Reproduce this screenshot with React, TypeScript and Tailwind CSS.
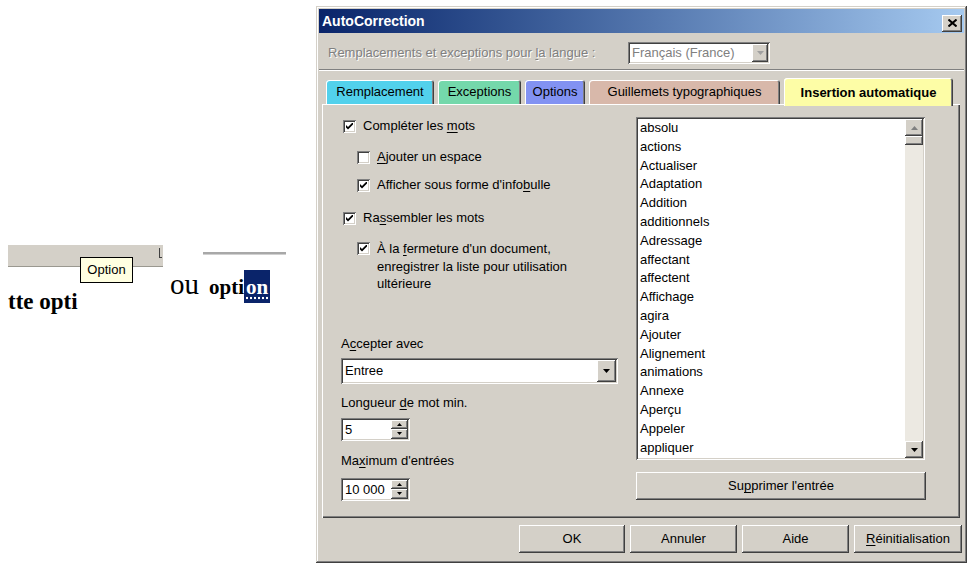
import type { ReactNode } from 'react'

const raised = 'shadow-[inset_-1px_-1px_#404040,inset_1px_1px_#ffffff,inset_-2px_-2px_#808080,inset_2px_2px_#d4d0c8]'
const sunken = 'shadow-[inset_1px_1px_#808080,inset_-1px_-1px_#ffffff,inset_2px_2px_#404040,inset_-2px_-2px_#d4d0c8]'

const words = [
  'absolu', 'actions', 'Actualiser', 'Adaptation', 'Addition', 'additionnels', 'Adressage', 'affectant', 'affectent',
  'Affichage', 'agira', 'Ajouter', 'Alignement', 'animations', 'Annexe', 'Aperçu', 'Appeler', 'appliquer',
]

function Tri({ up, color = '#000' }: { up?: boolean; color?: string }) {
  return (
    <svg width="7" height="4" viewBox="0 0 7 4">
      <path d={up ? 'M0 4h7L3.5 0z' : 'M0 0h7L3.5 4z'} fill={color} />
    </svg>
  )
}

function Check({ on }: { on: boolean }) {
  return (
    <span className={`w-[13px] h-[13px] bg-white shrink-0 flex items-center justify-center ${sunken}`}>
      {on && (
        <svg width="7" height="7" viewBox="0 0 7 7">
          <path d="M0 2L2 4L7 -1V1.5L2 6.5L0 4.5Z" fill="#000" />
        </svg>
      )}
    </span>
  )
}

function U({ children }: { children: ReactNode }) {
  return <span className="underline underline-offset-2">{children}</span>
}

function Spin({ value }: { value: string }) {
  return (
    <div className={`w-[69px] h-[23px] bg-white flex p-[2px] ${sunken}`}>
      <div className="flex-1 pl-[2px] leading-[19px]">{value}</div>
      <div className="w-[17px] flex flex-col">
        <div className={`flex-1 bg-[#d4d0c8] flex items-center justify-center ${raised}`}>
          <svg width="5" height="3" viewBox="0 0 5 3"><path d="M0 3h5L2.5 0z" fill="#000" /></svg>
        </div>
        <div className={`flex-1 bg-[#d4d0c8] flex items-center justify-center ${raised}`}>
          <svg width="5" height="3" viewBox="0 0 5 3"><path d="M0 0h5L2.5 3z" fill="#000" /></svg>
        </div>
      </div>
    </div>
  )
}

function Btn({ children, w }: { children: ReactNode; w: string }) {
  return <div className={`${w} h-[28px] bg-[#d4d0c8] flex items-center justify-center ${raised}`}>{children}</div>
}

const tabs = [
  { label: 'Remplacement', w: 'w-[108px]', bg: 'bg-[#52d1ec]' },
  { label: 'Exceptions', w: 'w-[83px]', bg: 'bg-[#74d8ab]' },
  { label: 'Options', w: 'w-[60px]', bg: 'bg-[#8292f2]' },
  { label: 'Guillemets typographiques', w: 'w-[191px]', bg: 'bg-[#d8b8aa]' },
]

export default function App() {
  return (
    <div className="w-[973px] h-[568px] bg-white flex overflow-hidden text-[13px] text-black font-['Liberation_Sans',Arial,sans-serif]">
      {/* left snippets */}
      <div className="w-[316px] shrink-0 flex pt-[245px]">
        <div className="relative ml-[8px] w-[155px]">
          <div className="h-[22px] bg-[#d4d0c8] border-b border-[#9a9890] relative">
            <div className="absolute right-[1px] top-[3px] w-[3px] h-[10px] border-l border-b border-[#404040]" />
          </div>
          <div className="absolute left-[72px] top-[12px] w-[53px] h-[26px] bg-[#ffffe1] border border-black flex items-center justify-center">
            Option
          </div>
          <div className="mt-[23px] font-['Liberation_Serif',serif] font-bold text-[23px] leading-none">tte opti</div>
        </div>
        <div className="ml-[7px] pt-[7px]">
          <div className="ml-[33px] w-[83px] h-[3px] bg-[#a8a8a8] border-b border-[#d0d0d0]" />
          <div className="flex items-baseline mt-[15px] font-['Liberation_Serif',serif]">
            <span className="text-[29px] leading-none">ou</span>
            <span className="ml-[10px] text-[21px] font-bold leading-none">
              opti
              <span className="bg-[#0a246a] text-white px-[2px] pt-[5px] pb-[4px] underline decoration-dotted decoration-white underline-offset-[3px]">on</span>
            </span>
          </div>
        </div>
      </div>

      {/* dialog */}
      <div className="mt-[6px] w-[651px] h-[557px] bg-[#d4d0c8] p-[3px] flex flex-col shadow-[inset_-1px_-1px_#404040,inset_1px_1px_#d4d0c8,inset_-2px_-2px_#808080,inset_2px_2px_#ffffff]">
        <div className="h-[24px] bg-gradient-to-r from-[#0a246a] to-[#a6caf0] flex items-center justify-between pl-[3px] pr-[2px]">
          <span className="text-white font-bold text-[14px]">AutoCorrection</span>
          <div className={`w-[20px] h-[17px] mt-[4px] bg-[#d4d0c8] flex items-center justify-center ${raised}`}>
            <svg width="9" height="8" viewBox="0 0 9 8">
              <path d="M0.5 0.5L8.5 7.5M8.5 0.5L0.5 7.5" stroke="#000" strokeWidth="2" />
            </svg>
          </div>
        </div>

        <div className="mt-[9px] h-[22px] flex items-center pl-[9px]">
          <span className="w-[300px] text-[#808080] [text-shadow:1px_1px_#ffffff]">
            Remplacements et exceptions pour <U>l</U>a langue :
          </span>
          <div className={`w-[142px] h-[22px] bg-white flex items-center p-[2px] ${sunken}`}>
            <span className="flex-1 pl-[2px] text-[#808080]">Français (France)</span>
            <div className={`w-[16px] h-[18px] bg-[#d4d0c8] flex items-center justify-center ${raised}`}>
              <Tri color="#a0a0a0" />
            </div>
          </div>
        </div>

        <div className="mt-[5px] border-t border-[#808080] border-b border-b-white" />

        <div className="mt-[7px] h-[26px] flex items-end gap-[4px] pl-[7px] relative z-10">
          {tabs.map((t) => (
            <div
              key={t.label}
              className={`${t.w} h-[24px] ${t.bg} rounded-t-[3px] flex items-center justify-center shadow-[inset_1px_1px_#ffffff,inset_-1px_0_#404040,inset_-2px_0_#808080]`}
            >
              {t.label}
            </div>
          ))}
          <div className="w-[169px] h-[28px] -mb-[2px] bg-[#fdfda6] rounded-t-[3px] flex items-start justify-center pt-[5px] font-bold shadow-[inset_1px_1px_#ffffff,inset_-1px_0_#404040,inset_-2px_0_#808080]">
            Insertion automatique
          </div>
        </div>

        {/* panel */}
        <div className="ml-[3px] mr-[4px] h-[414px] flex shadow-[inset_1px_1px_#ffffff,inset_-1px_-1px_#404040,inset_-2px_-2px_#808080]">
          <div className="w-[314px] pl-[19px] flex flex-col">
            <div className="mt-[13px] h-[18px] flex items-center ml-[2px] gap-[7px]">
              <Check on />
              <span>Compléter les <U>m</U>ots</span>
            </div>
            <div className="mt-[13px] h-[18px] flex items-center ml-[16px] gap-[7px]">
              <Check on={false} />
              <span><U>A</U>jouter un espace</span>
            </div>
            <div className="mt-[10px] h-[18px] flex items-center ml-[16px] gap-[7px]">
              <Check on />
              <span>Afficher sous forme d'info<U>b</U>ulle</span>
            </div>
            <div className="mt-[15px] h-[18px] flex items-center ml-[2px] gap-[7px]">
              <Check on />
              <span>Ra<U>s</U>sembler les mots</span>
            </div>
            <div className="mt-[12px] flex items-start ml-[16px] gap-[7px]">
              <div className="h-[18px] flex items-center">
                <Check on />
              </div>
              <span className="leading-[17.5px] pt-[1px]">
                À la <U>f</U>ermeture d'un document,
                <br />
                enregistrer la liste pour utilisation
                <br />
                ultérieure
              </span>
            </div>

            <div className="mt-[42px] h-[18px] leading-[18px]">
              <span>A<U>c</U>cepter avec</span>
            </div>
            <div className={`mt-[5px] w-[277px] h-[26px] bg-white flex items-center p-[2px] ${sunken}`}>
              <span className="flex-1 pl-[2px]">Entree</span>
              <div className={`w-[19px] h-[22px] bg-[#d4d0c8] flex items-center justify-center ${raised}`}>
                <Tri />
              </div>
            </div>
            <div className="mt-[10px] h-[18px] leading-[18px]">
              <span>Longueur <U>d</U>e mot min.</span>
            </div>
            <div className="mt-[6px]">
              <Spin value="5" />
            </div>
            <div className="mt-[11px] h-[18px] leading-[18px]">
              <span>Ma<U>x</U>imum d'entrées</span>
            </div>
            <div className="mt-[8px]">
              <Spin value="10 000" />
            </div>
          </div>

          <div className="pt-[13px] flex flex-col">
            <div className={`w-[289px] h-[343px] bg-white p-[2px] flex ${sunken}`}>
              <div className="flex-1 overflow-hidden pl-[2px]">
                {words.map((w) => (
                  <div key={w} className="h-[18.8px] leading-[18.8px]">{w}</div>
                ))}
              </div>
              <div className="w-[18px] bg-[#ece9e2] flex flex-col">
                <div className={`h-[17px] bg-[#d4d0c8] flex items-center justify-center ${raised}`}>
                  <Tri up color="#808080" />
                </div>
                <div className={`h-[9px] bg-[#d4d0c8] ${raised}`} />
                <div className="flex-1" />
                <div className={`h-[17px] bg-[#d4d0c8] flex items-center justify-center ${raised}`}>
                  <Tri />
                </div>
              </div>
            </div>
            <div className="mt-[12px]">
              <Btn w="w-[290px]">
                <span>Su<U>p</U>primer l'entrée</span>
              </Btn>
            </div>
          </div>
        </div>

        <div className="mt-[7px] flex justify-end gap-[5px] pr-[2px]">
          <Btn w="w-[106px]">OK</Btn>
          <Btn w="w-[107px]">Annuler</Btn>
          <Btn w="w-[107px]">Aide</Btn>
          <Btn w="w-[108px]">
            <span><U>R</U>éinitialisation</span>
          </Btn>
        </div>
      </div>
    </div>
  )
}
